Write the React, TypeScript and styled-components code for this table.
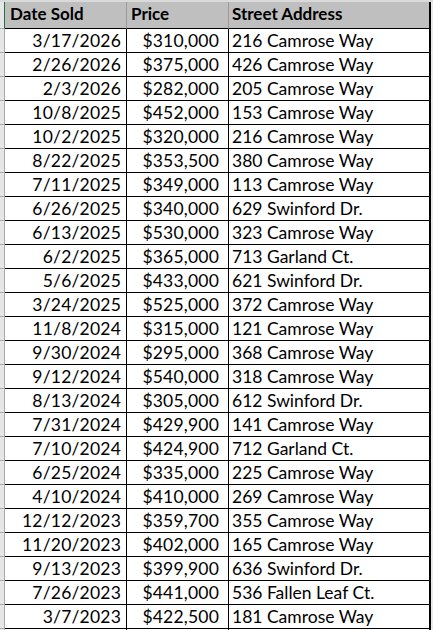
import React from 'react'
import styled, { createGlobalStyle, css } from 'styled-components'

const HEADER_GRAY = '#bfbfbf'
const GUTTER_GRAY = '#e6e6e6'
const GUTTER_LINE = '#ababab'
const EXCEL_GREEN = '#217346'

const sales: [string, string, string][] = [
  ['3/17/2026', '$310,000', '216 Camrose Way'],
  ['2/26/2026', '$375,000', '426 Camrose Way'],
  ['2/3/2026', '$282,000', '205 Camrose Way'],
  ['10/8/2025', '$452,000', '153 Camrose Way'],
  ['10/2/2025', '$320,000', '216 Camrose Way'],
  ['8/22/2025', '$353,500', '380 Camrose Way'],
  ['7/11/2025', '$349,000', '113 Camrose Way'],
  ['6/26/2025', '$340,000', '629 Swinford Dr.'],
  ['6/13/2025', '$530,000', '323 Camrose Way'],
  ['6/2/2025', '$365,000', '713 Garland Ct.'],
  ['5/6/2025', '$433,000', '621 Swinford Dr.'],
  ['3/24/2025', '$525,000', '372 Camrose Way'],
  ['11/8/2024', '$315,000', '121 Camrose Way'],
  ['9/30/2024', '$295,000', '368 Camrose Way'],
  ['9/12/2024', '$540,000', '318 Camrose Way'],
  ['8/13/2024', '$305,000', '612 Swinford Dr.'],
  ['7/31/2024', '$429,900', '141 Camrose Way'],
  ['7/10/2024', '$424,900', '712 Garland Ct.'],
  ['6/25/2024', '$335,000', '225 Camrose Way'],
  ['4/10/2024', '$410,000', '269 Camrose Way'],
  ['12/12/2023', '$359,700', '355 Camrose Way'],
  ['11/20/2023', '$402,000', '165 Camrose Way'],
  ['9/13/2023', '$399,900', '636 Swinford Dr.'],
  ['7/26/2023', '$441,000', '536 Fallen Leaf Ct.'],
  ['3/7/2023', '$422,500', '181 Camrose Way']
]

const GlobalStyle = createGlobalStyle`
  html, body {
    margin: 0;
    padding: 0;
    background: #ffffff;
  }
  body {
    font-family: Lato, "Liberation Sans", sans-serif;
    color: #000000;
    overflow: hidden;
  }
`

const Sheet = styled.div`
  width: 433px;
  height: 630px;
  overflow: hidden;
  display: flex;
  flex-direction: column;
`

const Row = styled.div<{ $header?: boolean }>`
  display: grid;
  grid-template-columns: 5px 122px 102px 202px 2px;
  height: 24px;
  flex: none;
  font-size: 17.5px;
  line-height: 23px;

  ${(p) =>
    p.$header &&
    css`
      height: 27px;
      border-top: 2px solid #dadada;
      font-size: 17px;
      font-weight: 700;
      line-height: 24px;
    `}
`

const Gutter = styled.div<{ $header?: boolean }>`
  background: ${GUTTER_GRAY};
  border-right: 1px solid ${(p) => (p.$header ? EXCEL_GREEN : GUTTER_LINE)};
  border-bottom: 1px solid ${GUTTER_LINE};
`

const Cell = styled.div<{ $header?: boolean; $align?: 'left' | 'right'; $pad?: number; $last?: boolean }>`
  background: ${(p) => (p.$header ? HEADER_GRAY : '#ffffff')};
  border-bottom: 1px solid #000000;
  border-right: ${(p) => (p.$last ? 2 : 1)}px solid ${(p) => (p.$header && !p.$last ? '#9a9a9a' : '#000000')};
  text-align: ${(p) => p.$align || 'left'};
  padding: ${(p) => (p.$align === 'right' ? `0 ${p.$pad ?? 5}px 0 0` : `0 0 0 ${p.$pad ?? 3}px`)};
  letter-spacing: ${(p) => (p.$align === 'right' ? '0.2px' : '0')};
  white-space: nowrap;
  overflow: hidden;
`

const Edge = styled.div`
  background: #e9e9e9;
`

export default function App() {
  return (
    <>
      <GlobalStyle />
      <Sheet>
        <Row $header>
          <Gutter $header />
          <Cell $header $pad={5}>Date Sold</Cell>
          <Cell $header $pad={4}>Price</Cell>
          <Cell $header $pad={3} $last>Street Address</Cell>
          <Edge />
        </Row>
        {sales.map(([date, price, street]) => (
          <Row key={date + street}>
            <Gutter />
            <Cell $align='right' $pad={5}>{date}</Cell>
            <Cell $align='right' $pad={9}>{price}</Cell>
            <Cell $pad={3} $last>{street}</Cell>
            <Edge />
          </Row>
        ))}
        <Row>
          <Gutter />
          <Cell />
          <Cell />
          <Cell $last />
          <Edge />
        </Row>
      </Sheet>
    </>
  )
}
